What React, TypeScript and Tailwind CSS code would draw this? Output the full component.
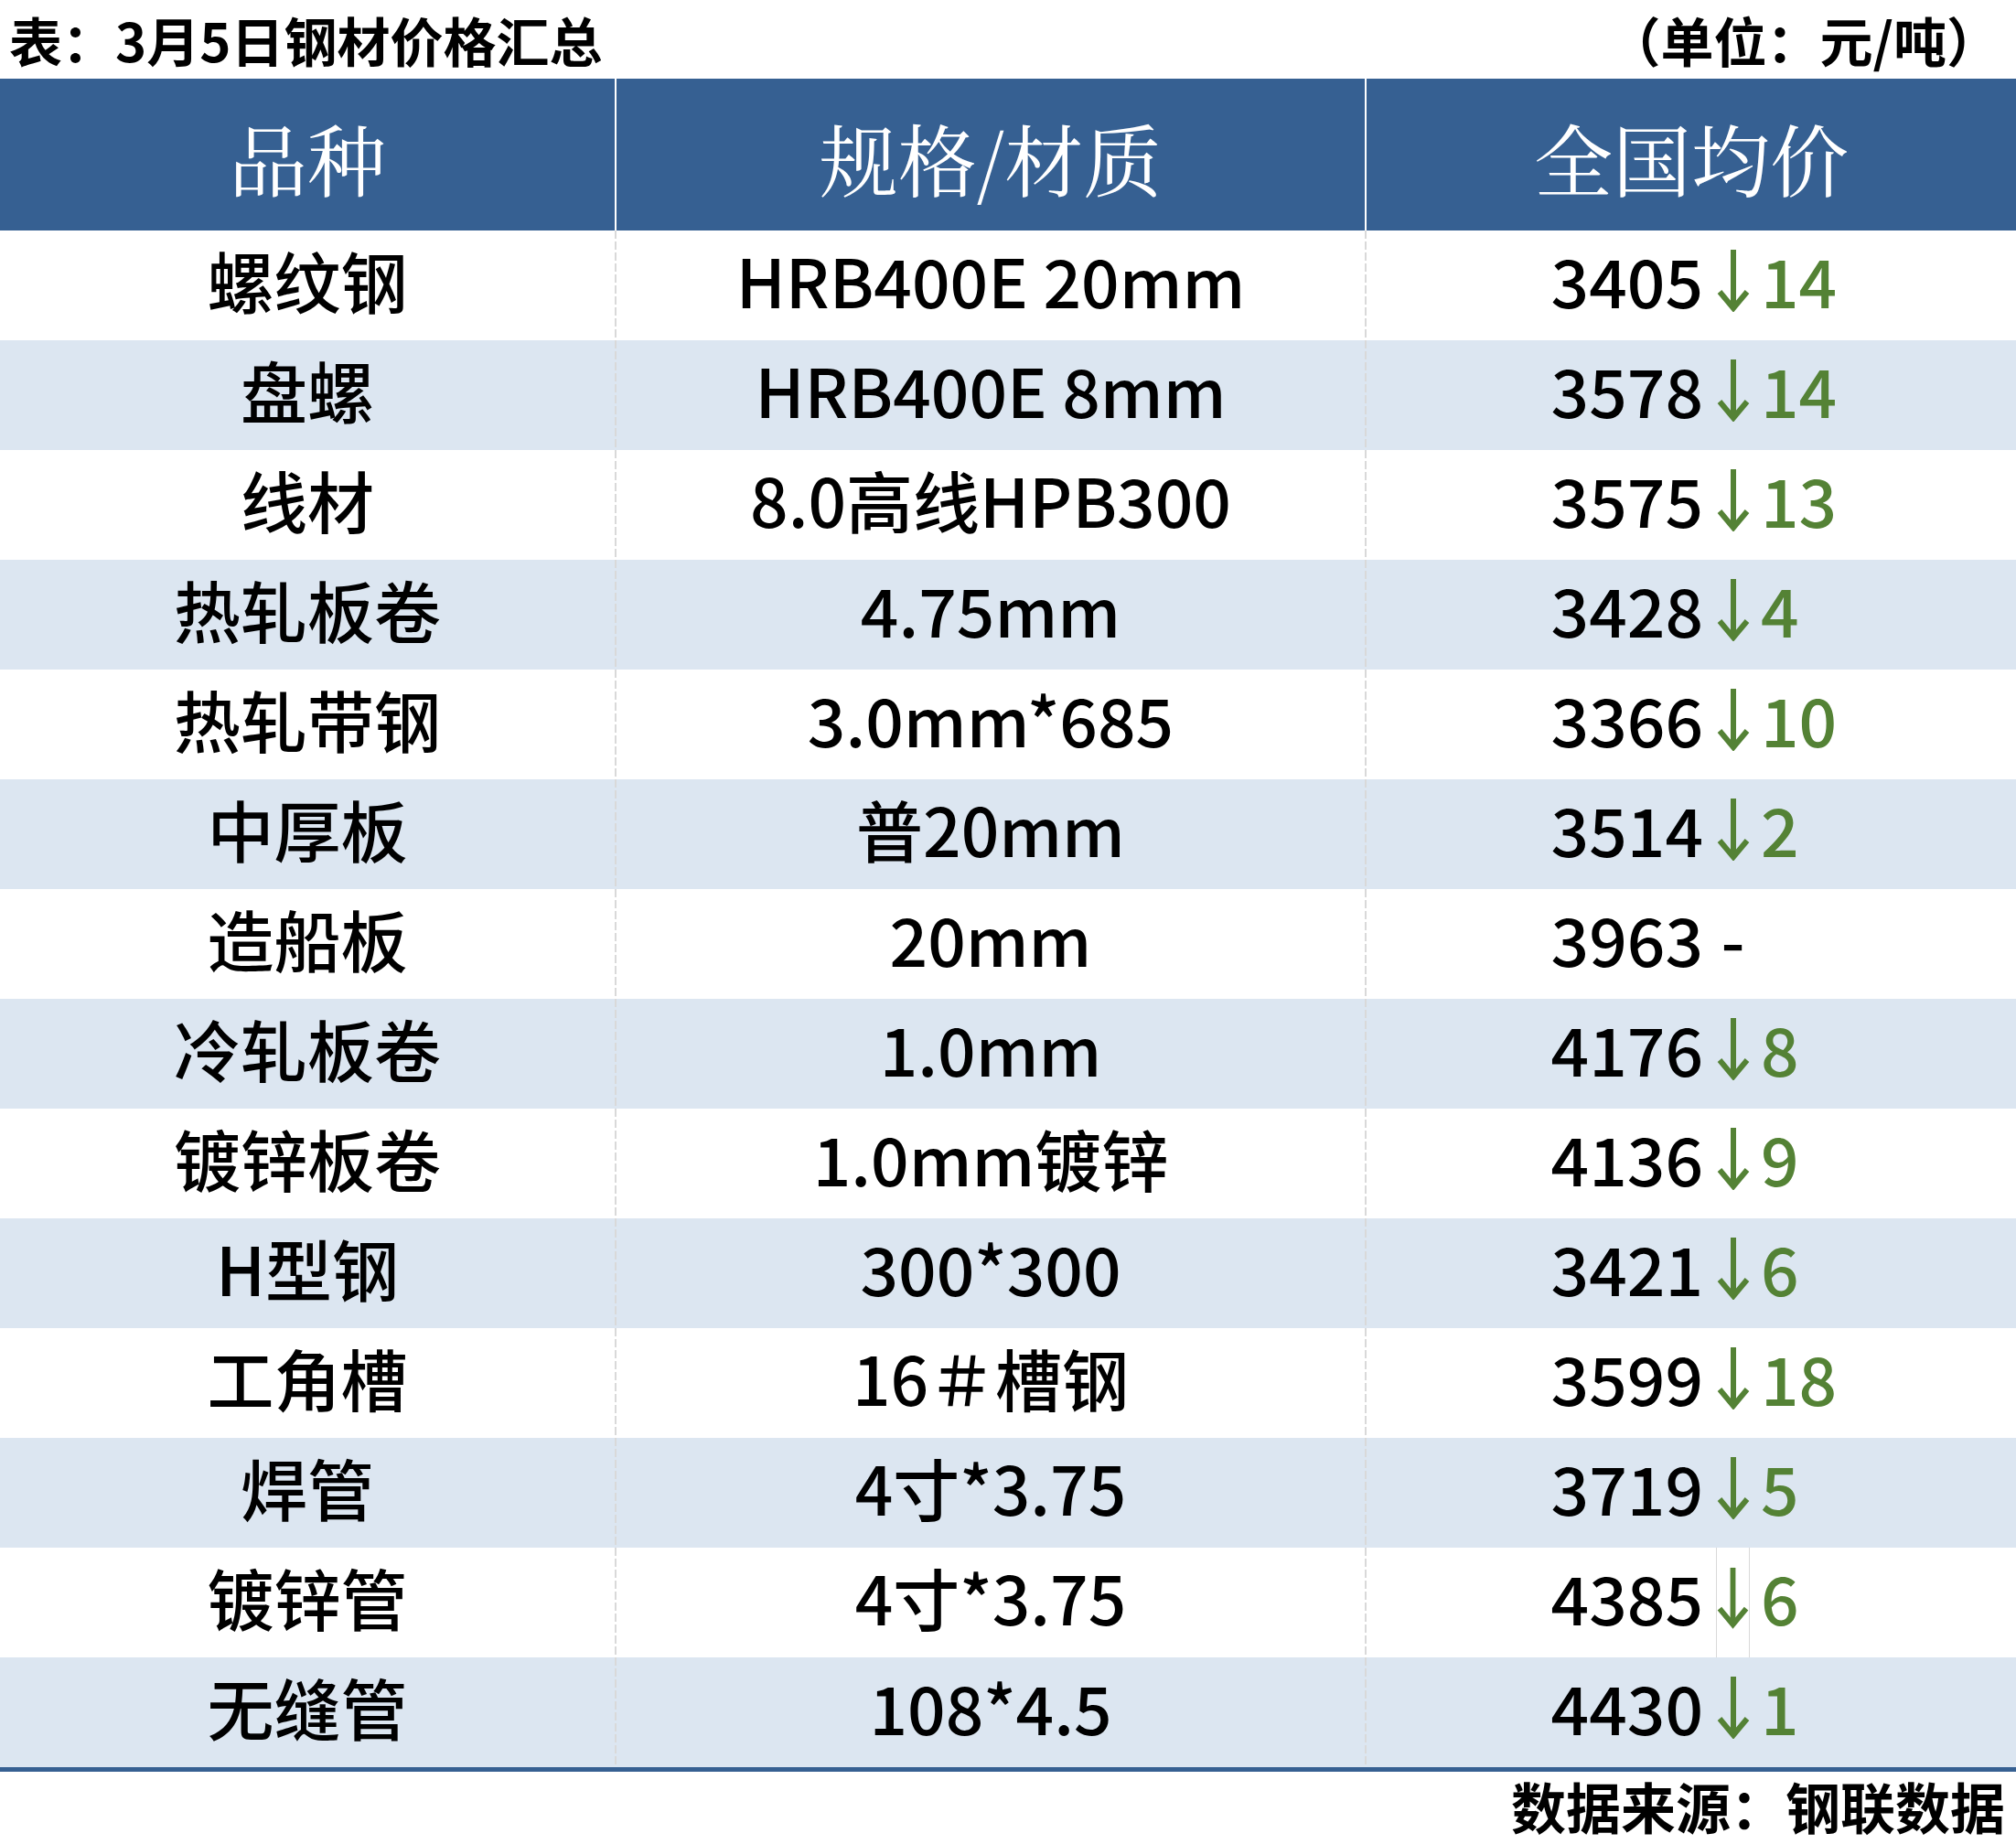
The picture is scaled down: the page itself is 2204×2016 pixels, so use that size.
import React from "react";

const SANS = "font-['Noto_Sans_CJK_SC','Noto_Sans',sans-serif]";
const SERIF = "font-['Noto_Serif_CJK_SC','Noto_Sans_CJK_SC',serif]";

const rows: [string, string, string, string, string][] = [
  ["螺纹钢", "HRB400E 20mm", "3405", "↓", "14"],
  ["盘螺", "HRB400E 8mm", "3578", "↓", "14"],
  ["线材", "8.0高线HPB300", "3575", "↓", "13"],
  ["热轧板卷", "4.75mm", "3428", "↓", "4"],
  ["热轧带钢", "3.0mm*685", "3366", "↓", "10"],
  ["中厚板", "普20mm", "3514", "↓", "2"],
  ["造船板", "20mm", "3963", "-", ""],
  ["冷轧板卷", "1.0mm", "4176", "↓", "8"],
  ["镀锌板卷", "1.0mm镀锌", "4136", "↓", "9"],
  ["H型钢", "300*300", "3421", "↓", "6"],
  ["工角槽", "16＃槽钢", "3599", "↓", "18"],
  ["焊管", "4寸*3.75", "3719", "↓", "5"],
  ["镀锌管", "4寸*3.75", "4385", "↓", "6"],
  ["无缝管", "108*4.5", "4430", "↓", "1"],
];

function DownArrow() {
  return (
    <svg width="36" height="68" viewBox="0 0 36 68" className="mt-[-2px]">
      <path d="M18 0 V64" stroke="#548235" strokeWidth="6" fill="none" />
      <path d="M3 46 L18 64 L33 46" stroke="#548235" strokeWidth="6" fill="none" strokeLinejoin="miter" />
    </svg>
  );
}

function Dashed() {
  return (
    <div className="w-[2px] self-stretch bg-[repeating-linear-gradient(to_bottom,#d9d9d9_0px,#d9d9d9_9px,transparent_9px,transparent_12px)]" />
  );
}

export default function App() {
  return (
    <div className={`w-[2204px] h-[2016px] bg-white text-black ${SANS}`}>
      {/* title */}
      <div className="h-[86px] flex items-start justify-between">
        <div className="pl-[10px] text-[58px] font-bold leading-[86px]">表：3月5日钢材价格汇总</div>
        <div className="pr-[18px] text-[58px] font-bold leading-[86px]">（单位：元/吨）</div>
      </div>

      {/* header */}
      <div className="h-[166px] flex bg-[#366092] text-white">
        <div className={`w-[672px] flex items-center justify-center pt-[8px] text-[86px] leading-[1.2] ${SERIF}`}>品种</div>
        <div className="w-[2px] bg-white" />
        <div className={`w-[818px] flex items-center justify-center pt-[8px] text-[86px] leading-[1.2] ${SERIF}`}>规格/材质</div>
        <div className="w-[2px] bg-white" />
        <div className={`flex-1 flex items-center justify-center pt-[8px] text-[86px] leading-[1.2] ${SERIF}`}>全国均价</div>
      </div>

      {/* body */}
      <div>
        {rows.map(([name, spec, price, mark, change], i) => (
          <div
            key={name}
            className={`h-[120px] flex text-[73px] font-medium leading-[1.2] ${i % 2 === 1 ? "bg-[#dce6f1]" : "bg-white"}`}
          >
            <div className="w-[672px] flex items-center justify-center pb-[12px]">{name}</div>
            <Dashed />
            <div className="w-[818px] flex items-center justify-center pb-[12px]">{spec}</div>
            <Dashed />
            <div className="flex-1 flex">
              <div className="w-[382px] flex items-center justify-end pr-[14px] pb-[12px]">{price}</div>
              <div
                className={`w-[37px] flex items-center justify-center pb-[8px] ${name === "镀锌管" ? "border-x border-[#d9d9d9]" : ""}`}
              >
                {mark === "↓" ? <DownArrow /> : <span className="text-black pb-[4px]">{mark}</span>}
              </div>
              <div className="flex-1 flex items-center pl-[12px] pb-[12px] text-[#548235]">{change}</div>
            </div>
          </div>
        ))}
      </div>
      <div className="h-[5px] bg-[#366092]" />

      {/* footer */}
      <div className="h-[79px] flex items-center justify-end pr-[12px] pb-[6px]">
        <div className="text-[60px] font-bold leading-[1.2]">数据来源：钢联数据</div>
      </div>
    </div>
  );
}
